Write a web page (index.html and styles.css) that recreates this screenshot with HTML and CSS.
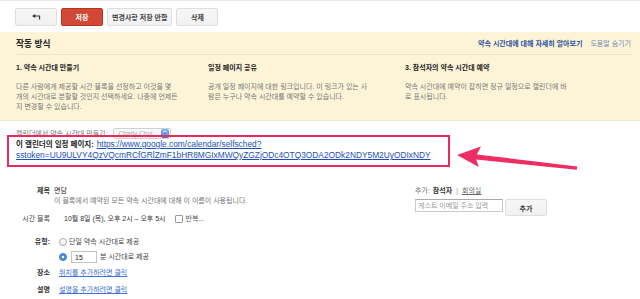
FILE: index.html
```html
<!DOCTYPE html>
<html lang="ko">
<head>
    <meta charset="UTF-8">
    <meta name="viewport" content="width=device-width, initial-scale=1.0">
    <title>약속 시간대 수정</title>
    <link rel="stylesheet" href="styles.css">
</head>
<body>
    <!-- 상단 버튼 -->
    <div class="toolbar">
        <button class="btn btn-back" title="뒤로">
            <svg width="9" height="6" viewBox="0 0 9 6">
                <path d="M0 2 L3.2 0 L3.2 4 Z" fill="#333"/>
                <path d="M3 2 H7.6 V5.5" fill="none" stroke="#333" stroke-width="1.1"/>
            </svg>
        </button>
        <button class="btn btn-red">저장</button>
        <button class="btn">변경사항 저장 안함</button>
        <button class="btn">삭제</button>
    </div>

    <!-- 도움말 -->
    <div class="help">
        <div class="help-head">
            <h2>작동 방식</h2>
            <div class="help-links">
                <a href="#" class="learn-more">약속 시간대에 대해 자세히 알아보기</a>
                <a href="#" class="hide-help">도움말 숨기기</a>
            </div>
        </div>
        <div class="help-cols">
            <div class="step">
                <h3>1. 약속 시간대 만들기</h3>
                <p>다른 사람에게 제공할 시간 블록을 선정하고 이것을 몇<br>개의 시간대로 분할할 것인지 선택하세요. 나중에 언제든<br>지 변경할 수 있습니다.</p>
            </div>
            <div class="step">
                <h3>일정 페이지 공유</h3>
                <p>공개 일정 페이지에 대한 링크입니다. 이 링크가 있는 사<br>람은 누구나 약속 시간대를 예약할 수 있습니다.</p>
            </div>
            <div class="step">
                <h3>3. 참석자의 약속 시간대 예약</h3>
                <p>약속 시간대에 예약이 잡히면 정규 일정으로 캘린더에 바<br>로 표시됩니다.</p>
            </div>
        </div>
    </div>

    <!-- 캘린더 / 일정 페이지 -->
    <div class="calendar-section">
        <div class="owner-row">
            <span>캘린더에서 약속 시간대 만들기:</span>
            <div class="select">
                <span>Charly Choi</span>
                <span class="select-arrow">
                    <svg width="8" height="9" viewBox="0 0 8 9">
                        <path d="M2 3.6 L4 1.6 L6 3.6 M2 5.4 L4 7.4 L6 5.4" fill="none" stroke="#fff" stroke-width="1"/>
                    </svg>
                </span>
            </div>
        </div>
        <div class="page-link">
            <b>이 캘린더의 일정 페이지:</b>
            <a href="#" class="schedule-url">https://www.google.com/calendar/selfsched?<br>sstoken=UU9ULVY4QzVQcmRCfGRlZmF1bHR8MGIxMWQyZGZjODc4OTQ3ODA2ODk2NDY5M2UyODIxNDY</a>
            <div class="highlight"></div>
            <svg class="pointer" width="150" height="35" viewBox="0 0 150 35">
                <polygon points="17,15 41,6.5 36.8,14.4 137.3,26.4 136.7,29.8 36.2,19.4 38.8,27" fill="#ee2d62"/>
            </svg>
        </div>
    </div>

    <!-- 상세 정보 -->
    <div class="details">
        <div class="fields">
            <div class="field">
                <span class="label">제목</span>
                <div class="value">
                    <div>면담</div>
                    <div class="hint">이 블록에서 예약된 모든 약속 시간대에 대해 이 이름이 사용됩니다.</div>
                </div>
            </div>
            <div class="field field-time">
                <span class="label label-light">시간 블록</span>
                <div class="value value-time">
                    <span>10월 8일 (목), 오후 2시 – 오후 5시</span>
                    <span class="checkbox"></span>
                    <span class="repeat">반복...</span>
                </div>
            </div>
            <div class="field field-type">
                <span class="label">유형:</span>
                <div class="value value-type">
                    <div class="option">
                        <span class="radio"></span>
                        <span>단일 약속 시간대로 제공</span>
                    </div>
                    <div class="option option-slots">
                        <span class="radio radio-on"></span>
                        <span class="duration">15</span>
                        <span>분 시간대로 제공</span>
                    </div>
                </div>
            </div>
            <div class="field field-place">
                <span class="label">장소</span>
                <div class="value value-link"><a href="#">위치를 추가하려면 클릭</a></div>
            </div>
            <div class="field field-desc">
                <span class="label">설명</span>
                <div class="value value-link"><a href="#">설명을 추가하려면 클릭</a></div>
            </div>
        </div>

        <div class="add-guests">
            <div class="add-tabs">
                <span class="muted">추가:</span>
                <b>참석자</b>
                <span class="sep">|</span>
                <a href="#">회의실</a>
            </div>
            <div class="add-row">
                <input type="text" class="guest-input" placeholder="게스트 이메일 주소 입력">
                <button class="btn btn-add">추가</button>
            </div>
        </div>
    </div>
</body>
</html>
```

FILE: styles.css
```css
body {
    margin: 0;
    font-family: "Liberation Sans", "Noto Sans CJK KR", sans-serif;
    font-size: 7px;
    color: #222;
    background-color: #fff;
}

a {
    text-decoration: none;
}

/* 상단 버튼 */
.toolbar {
    display: flex;
    gap: 4px;
    padding: 7px 0 6px 15px;
    border-top: 1px solid #e9e9e9;
}

.btn {
    height: 18px;
    min-width: 42px;
    padding: 0 4px;
    font-family: inherit;
    font-size: 7px;
    font-weight: bold;
    color: #444;
    background: linear-gradient(#f7f7f7, #f1f1f1);
    border: 1px solid #dedede;
    border-radius: 2px;
}

.btn-back svg {
    display: block;
    margin: 0 auto;
}

.btn-red {
    color: #fff;
    background: #d14836;
    border-color: #b8341f;
}

/* 도움말 */
.help {
    background-color: #fdf4d7;
    border-bottom: 1px solid #ebe6d8;
    padding: 0 9px 8px 16px;
}

.help-head {
    display: flex;
    justify-content: space-between;
    align-items: center;
    height: 22px;
    border-bottom: 1px solid #efe3c0;
}

.help-head h2 {
    margin: 0;
    font-size: 8.7px;
    color: #222;
}

.help-links a {
    margin-left: 6px;
}

.learn-more {
    font-weight: bold;
    color: #2a4f9e;
}

.hide-help {
    color: #6f86bb;
}

.help-cols {
    display: grid;
    grid-template-columns: 192px 197px 1fr;
    padding-top: 8px;
}

.step h3 {
    margin: 0;
    font-size: 7px;
    line-height: 10px;
    color: #222;
}

.step p {
    margin: 9px 0 0;
    line-height: 10px;
    color: #777;
}

/* 캘린더 / 일정 페이지 */
.calendar-section {
    padding: 6px 0 0 16px;
}

.owner-row {
    display: flex;
    align-items: center;
    gap: 5px;
    height: 12px;
    color: #777;
}

.select {
    display: flex;
    justify-content: space-between;
    align-items: center;
    box-sizing: border-box;
    width: 58px;
    height: 11px;
    padding: 0 1px 0 5px;
    font-size: 6.5px;
    color: #aaa;
    background: linear-gradient(#fff, #eee);
    border: 1px solid #d0d0d0;
    border-radius: 2px;
}

.select-arrow {
    width: 8px;
    height: 9px;
    background: linear-gradient(#79b3f7, #2d76e2);
    border-radius: 2px;
}

.select-arrow svg {
    display: block;
}

.page-link {
    position: relative;
    line-height: 11px;
}

.page-link b {
    font-size: 7.5px;
    color: #222;
}

.schedule-url {
    margin-left: 1px;
    font-size: 8.35px;
    color: #1d4fb5;
    text-decoration: underline;
}

.highlight {
    position: absolute;
    top: -4px;
    left: -9px;
    width: 443px;
    height: 32px;
    box-sizing: border-box;
    border: 2px solid #ea2a5e;
}

.pointer {
    position: absolute;
    top: 1px;
    left: 424px;
}

/* 상세 정보 */
.details {
    display: grid;
    grid-template-columns: 415px auto;
    margin-top: 25px;
}

.field {
    display: grid;
    grid-template-columns: 50px 1fr;
    column-gap: 4px;
    line-height: 10px;
}

.label {
    text-align: right;
    font-weight: bold;
    color: #333;
}

.label-light {
    font-weight: normal;
    color: #444;
}

.hint {
    color: #777;
}

.field-time {
    margin-top: 8px;
}

.value-time {
    display: flex;
    align-items: center;
    padding-left: 10px;
    color: #333;
}

.checkbox {
    width: 6px;
    height: 6px;
    margin: 0 3px 0 9px;
    border: 1px solid #999;
    border-radius: 1px;
}

.repeat {
    color: #555;
}

.field-type {
    margin-top: 13px;
}

.value-type {
    padding-left: 5px;
    color: #444;
}

.option {
    display: flex;
    align-items: center;
    gap: 2px;
}

.option-slots {
    height: 12px;
    margin-top: 4px;
    gap: 4px;
}

.radio {
    width: 6px;
    height: 6px;
    border: 1px solid #a8a8a8;
    border-radius: 50%;
    background: linear-gradient(#fff, #f0f0f0);
}

.radio-on {
    border-color: #3775d0;
    background: radial-gradient(circle, #fff 0 1.3px, #4a8fe6 1.6px);
}

.duration {
    box-sizing: border-box;
    width: 26px;
    height: 12px;
    padding-left: 3px;
    margin-right: -1px;
    line-height: 11px;
    color: #222;
    border: 1px solid #c4c4c4;
}

.field-place {
    margin-top: 5px;
}

.field-desc {
    margin-top: 7px;
}

.value-link {
    padding-left: 5px;
}

.value-link a {
    color: #4170d6;
    text-decoration: underline;
}

.add-guests {
    line-height: 10px;
}

.add-tabs {
    display: flex;
    gap: 3px;
}

.muted {
    color: #777;
}

.add-tabs b {
    color: #333;
}

.sep {
    color: #999;
    margin: 0 1px;
}

.add-tabs a {
    color: #666;
    text-decoration: underline;
}

.add-row {
    display: flex;
    align-items: flex-start;
    gap: 2px;
    margin-top: 3px;
}

.guest-input {
    box-sizing: border-box;
    width: 88px;
    height: 13px;
    padding: 0 2px;
    font-family: inherit;
    font-size: 7px;
    border: 1px solid #c9c9c9;
    border-top-color: #aaa;
}

.guest-input::placeholder {
    color: #999;
}

.btn-add {
    height: 17px;
    min-width: 42px;
}
```
